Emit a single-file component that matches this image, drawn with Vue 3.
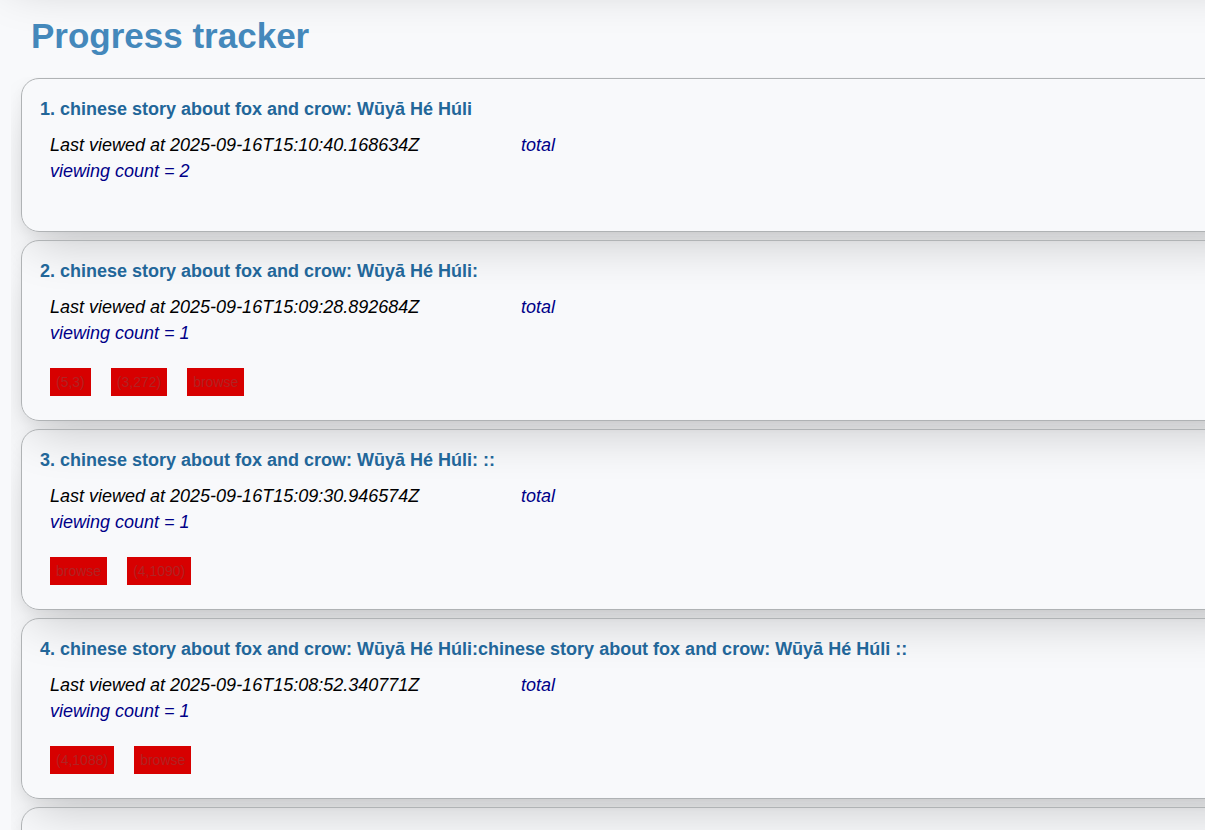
<script setup>
const story = 'chinese story about fox and crow: Wūyā Hé Húli'

const entries = [
  { title: story, viewed: '2025-09-16T15:10:40.168634Z', count: 2, marks: [] },
  { title: `${story}:`, viewed: '2025-09-16T15:09:28.892684Z', count: 1, marks: ['(5,3)', '(3,272)', 'browse'] },
  { title: `${story}: ::`, viewed: '2025-09-16T15:09:30.946574Z', count: 1, marks: ['browse', '(4,1090)'] },
  { title: `${story}:${story} ::`, viewed: '2025-09-16T15:08:52.340771Z', count: 1, marks: ['(4,1088)', 'browse'] },
]
</script>

<template>
  <div class="page">
    <header class="page-header">
      <h1>Progress tracker</h1>
    </header>
    <main class="entries">
      <article v-for="(entry, i) in entries" :key="i" class="entry">
        <h2>{{ i + 1 }}. {{ entry.title }}</h2>
        <div class="details">
          <span class="viewed">Last viewed at {{ entry.viewed }}</span>
          <span>total</span>
          <span>viewing count = {{ entry.count }}</span>
        </div>
        <div class="marks">
          <button v-for="mark in entry.marks" :key="mark" type="button">{{ mark }}</button>
        </div>
      </article>
      <article class="entry"></article>
    </main>
  </div>
</template>

<style>
html {
  background: #f8f9fb;
}
body {
  overflow: hidden;
}
</style>

<style scoped>
.page {
  height: 100vh;
  overflow: hidden;
  font-family: "Liberation Sans", Arial, sans-serif;
}
.page-header {
  position: relative;
  padding: 16px 31px 21px;
}
/* shadow cast by the panel above the heading */
.page-header::before {
  content: "";
  position: absolute;
  left: 0;
  right: -60px;
  bottom: calc(100% + 32px);
  height: 160px;
  border-radius: 18px;
  box-shadow: 0 25px 50px -12px rgba(0, 0, 0, 0.25);
}
h1 {
  position: relative;
  margin: 0;
  font-size: 35px;
  line-height: 40px;
  color: #4488bb;
}
.entries {
  display: flex;
  flex-direction: column;
  gap: 8px;
  margin-left: 11px;
  padding: 1px 0 0 10px;
  overflow: hidden;
}
.entry {
  flex: none;
  margin-right: -60px;
  padding: 17px 18px 24px;
  min-height: 111px;
  border: 1px solid #b0b3b5;
  border-radius: 18px;
  box-shadow:
    0 24px 48px -12px rgba(0, 0, 0, 0.19),
    0 4px 12px rgba(0, 0, 0, 0.05);
}
h2 {
  margin: 0 0 10px;
  font-size: 18px;
  line-height: 26px;
  color: #226699;
}
.details {
  display: grid;
  grid-template-columns: 471px 1fr;
  margin-left: 10px;
  font-size: 18px;
  line-height: 26px;
  font-style: italic;
  color: #000088;
}
.viewed {
  color: #000;
}
.marks {
  display: flex;
  gap: 20px;
  min-height: 1px;
  margin: 22px 0 0 10px;
}
.marks button {
  padding: 0 6px;
  border: 0;
  background: #d70000;
  color: #b22222;
  font: 14px/28px "Liberation Sans", Arial, sans-serif;
}
</style>
